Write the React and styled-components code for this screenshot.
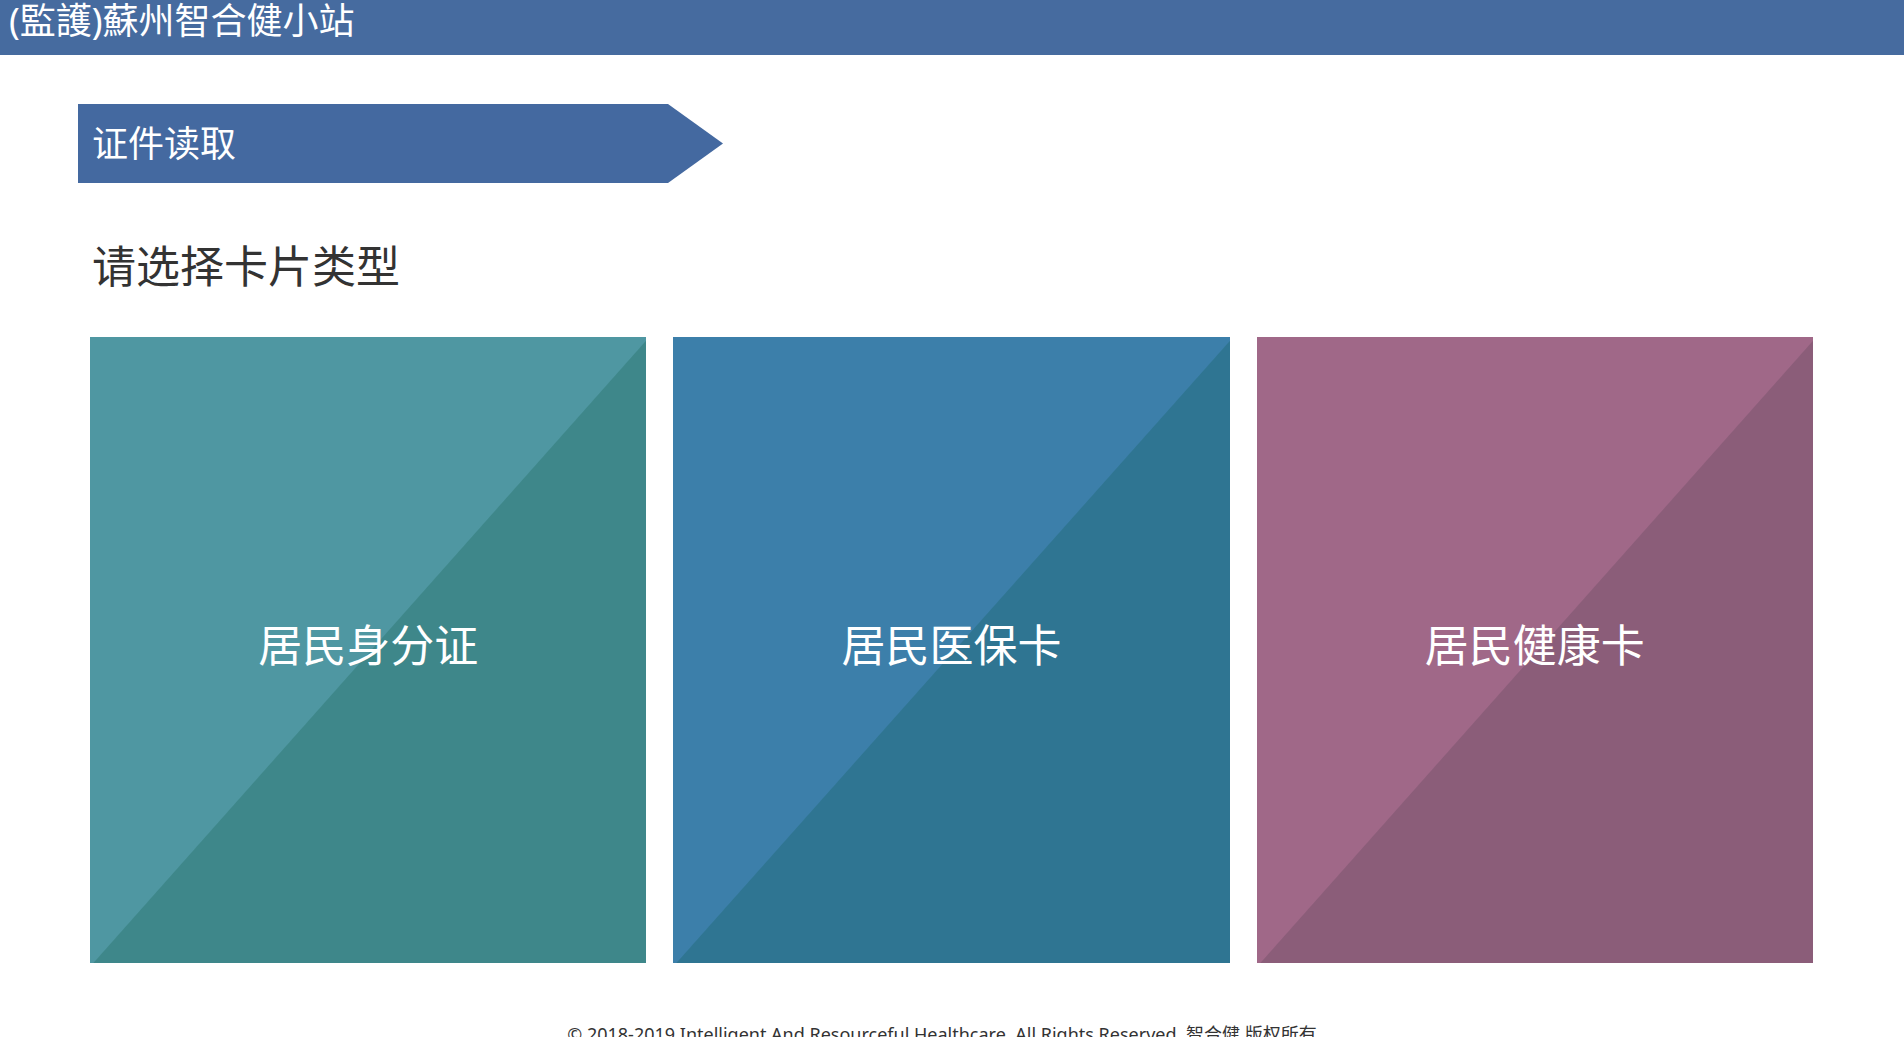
import React from "react";
import styled, { createGlobalStyle } from "styled-components";

const GlobalStyle = createGlobalStyle`
  * {
    box-sizing: border-box;
  }

  body {
    margin: 0;
    background: #fff;
    color: #333;
    font-family: "Noto Sans", "Noto Sans CJK SC", sans-serif;
  }
`;

const Header = styled.header`
  height: 55px;
  padding: 0 9px;
  background: #466b9f;
  color: #fff;
`;

const SiteName = styled.h1`
  margin: 0;
  font-size: 36px;
  font-weight: 400;
  line-height: 42px;
`;

const Main = styled.main`
  padding: 49px 78px 0;
`;

const StepBanner = styled.h2`
  display: flex;
  align-items: center;
  width: 645px;
  max-width: 100%;
  height: 79px;
  margin: 0;
  padding: 0 14px 4px;
  background: #4469a0;
  clip-path: polygon(0 0, calc(100% - 55px) 0, 100% 50%, calc(100% - 55px) 100%, 0 100%);
  color: #fff;
  font-size: 36px;
  font-weight: 400;
`;

const Prompt = styled.h3`
  margin: 51px 14px 0;
  font-size: 44px;
  font-weight: 400;
  line-height: 64px;
`;

const CardGrid = styled.div`
  display: grid;
  grid-template-columns: repeat(3, 1fr);
  gap: 27px;
  margin-top: 39px;
  padding: 0 13px 0 12px;
`;

const CardButton = styled.button`
  display: flex;
  align-items: center;
  justify-content: center;
  min-height: 626px;
  padding: 0 0 14px;
  border: 0;
  background: linear-gradient(
    to bottom right,
    ${({ $light }) => $light} calc(50% + 2px),
    ${({ $dark }) => $dark} calc(50% + 3px)
  );
  color: #fff;
  font-family: inherit;
  font-size: 44px;
  cursor: pointer;
`;

const Footer = styled.footer`
  padding: 57px 20px 24px 0;
  font-size: 18px;
  line-height: 28px;
  text-align: center;
`;

const cardTypes = [
  { label: "居民身分证", light: "#4f97a2", dark: "#3e878a" },
  { label: "居民医保卡", light: "#3c7faa", dark: "#2f7592" },
  { label: "居民健康卡", light: "#a06888", dark: "#8b5d79" },
];

export default function App() {
  return (
    <>
      <GlobalStyle />
      <Header>
        <SiteName>(監護)蘇州智合健小站</SiteName>
      </Header>
      <Main>
        <StepBanner>证件读取</StepBanner>
        <Prompt>请选择卡片类型</Prompt>
        <CardGrid>
          {cardTypes.map(({ label, light, dark }) => (
            <CardButton key={label} type="button" $light={light} $dark={dark}>
              {label}
            </CardButton>
          ))}
        </CardGrid>
      </Main>
      <Footer>
        © 2018-2019 Intelligent And Resourceful Healthcare. All Rights Reserved. 智合健 版权所有
      </Footer>
    </>
  );
}
